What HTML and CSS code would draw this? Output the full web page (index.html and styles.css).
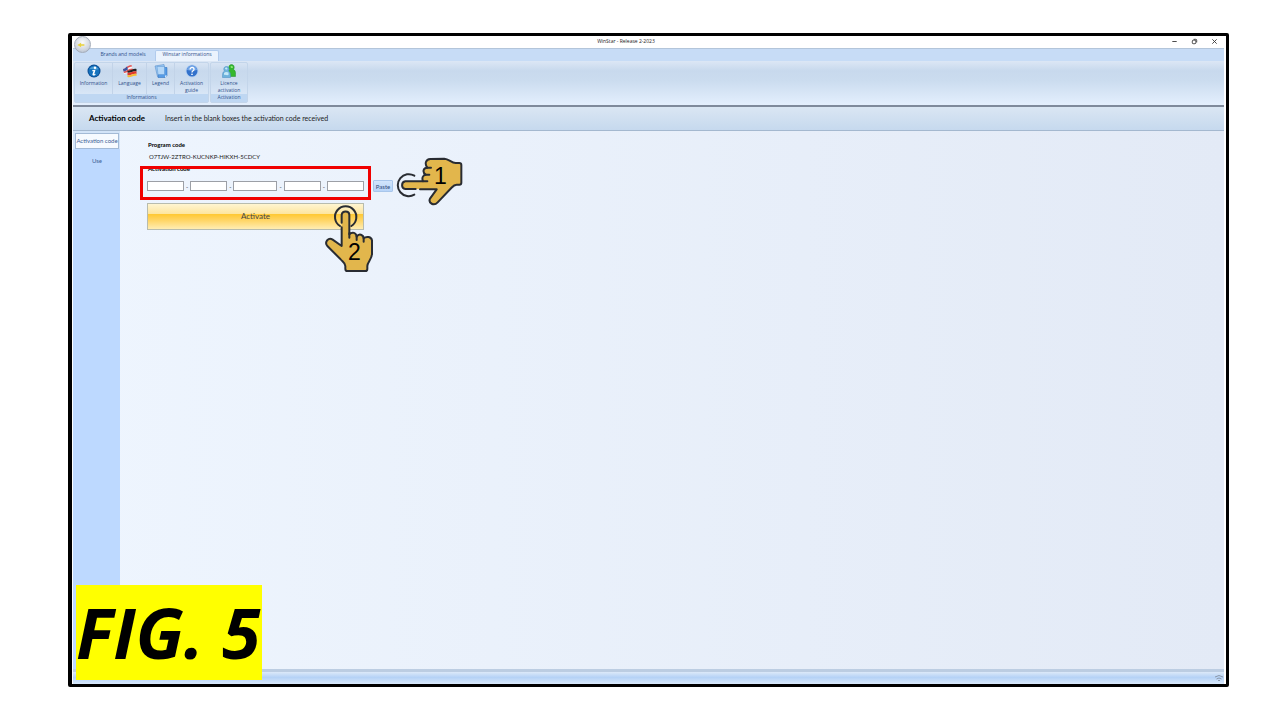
FILE: index.html
```html
<!DOCTYPE html>
<html lang="en">
<head>
  <meta charset="UTF-8">
  <meta name="viewport" content="width=device-width, initial-scale=1.0">
  <title>WinStar - Release 2-2023</title>
  <link rel="stylesheet" href="styles.css">
</head>
<body>
  <div class="window">
    <header class="titlebar">
      <button class="orb" aria-label="Menu">
        <svg viewBox="0 0 16 16"><path d="M2.500 8.500l4-2.500v1.700h3.500v1.600H6.500V11z" fill="#e9d23c"/></svg>
      </button>
      <h1>WinStar - Release 2-2023</h1>
      <div class="window-buttons">
        <button aria-label="Minimize"><svg viewBox="0 0 8 8"><path d="M1.500 4h5"/></svg></button>
        <button aria-label="Restore"><svg viewBox="0 0 8 8"><rect x="1.500" y="2.500" width="4" height="4" rx="1"/><path d="M3 1.500h2.500a1 1 0 0 1 1 1V5"/></svg></button>
        <button aria-label="Close"><svg viewBox="0 0 8 8"><path d="M1.500 1.500l5 5M6.500 1.500l-5 5"/></svg></button>
      </div>
    </header>

    <nav class="tabs">
      <a href="#brands" class="tab">Brands and models</a>
      <a href="#info" class="tab active">Winstar informations</a>
    </nav>

    <!-- Ribbon -->
    <div class="ribbon">
      <section class="group informations">
        <div class="tools">
          <button class="tool">
            <svg viewBox="0 0 28 28">
              <circle cx="14" cy="14" r="13" fill="#0b4d94"/>
              <circle cx="14" cy="14" r="11" fill="#1572bd"/>
              <path d="M5 10a10 9 0 0 1 18 0c-5 3-13-1-18 0z" fill="#4f9fd6"/>
              <circle cx="16" cy="7.500" r="2.500" fill="#fff"/>
              <path d="M10.500 12.500l6.500-1-2.500 9 3-1-1 2.500c-3 2-6.500 1-5.500-2l2-6-3 .500z" fill="#fff"/>
            </svg>
            Information
          </button>
          <button class="tool">
            <svg viewBox="0 0 28 28">
              <path d="M0 10c6 0 8-8 17-8l3 12c-8 0-11 6-18 6z" fill="#f7f2f2"/>
              <path d="M0 10c6 0 8-8 17-8l1 3C9 5 7 13 1 13zM1 15c6 0 9-6 18-6l1 3C12 12 9 18 2 18z" fill="#df5355"/>
              <path d="M0 10c4 0 5-3 8-5l2 6c-3 1-5 4-9 4z" fill="#3855a5"/>
              <path d="M9 13c6 2 11-5 18-3v5c-7-2-12 4-18 2z" fill="#222"/>
              <path d="M9 17c6 2 12-4 18-2v5c-6-2-12 4-18 2z" fill="#e2382a"/>
              <path d="M9 22c6 2 12-4 18-2v4c-6-2-12 4-18 2z" fill="#f5bc35"/>
            </svg>
            Language
          </button>
          <button class="tool">
            <svg viewBox="0 0 28 28">
              <path d="M2 4l18-3 4 21-17 3z" fill="#9ac8f4" stroke="#4a82c2"/>
              <path d="M10 7h16v16l-4 4H8z" fill="#559be6" stroke="#2968b5"/>
              <path d="M6 5h15v16H8z" fill="#b4d7f8" stroke="#5c94d0"/>
              <path d="M22 27v-4h4" fill="#e4f3ff"/>
            </svg>
            Legend
          </button>
          <button class="tool">
            <svg viewBox="0 0 28 28">
              <circle cx="14" cy="14" r="13" fill="#b8d2f2"/>
              <circle cx="14" cy="14" r="11" fill="#3271cb"/>
              <path d="M4 12a10 9 0 0 1 20 0c-6 2-13 2-20 0z" fill="#6fa3e6"/>
              <path d="M10 11c0-6 9-5 8 0-.5 3-4 2.500-4 6" fill="none" stroke="#fff" stroke-width="2.600"/>
              <circle cx="14" cy="20.500" r="1.700" fill="#fff"/>
            </svg>
            Activation<br>guide
          </button>
        </div>
        <h2>Informations</h2>
      </section>
      <section class="group activation">
        <div class="tools">
          <button class="tool">
            <svg viewBox="0 0 28 28">
              <path d="M15 11c-3-4-1-10 4-10s7 6 4 10c5 2 4 8 4 14H13c0-7-1-12 2-14z" fill="#34b82d" stroke="#23882a"/>
              <path d="M17 5c2-2 5-1 5 2-2 2-5 1-5-2z" fill="#90e779"/>
              <path d="M5 14c-3-4-1-9 4-9s6 5 4 9c4 2 4 6 4 13H1c0-7 0-11 4-13z" fill="#6fb3dc" stroke="#438ac0"/>
              <path d="M6 8c2-2 5-1 5 2-2 2-5 1-5-2zM4 18c3-3 6-2 9-1v5c-4 1-6-1-9 0z" fill="#c4e8f7"/>
            </svg>
            Licence<br>activation
          </button>
        </div>
        <h2>Activation</h2>
      </section>
    </div>

    <div class="heading">
      <h2>Activation code</h2>
      <p>Insert in the blank boxes the activation code received</p>
    </div>

    <main class="content">
      <nav class="sidebar">
        <a href="#code" class="active">Activation code</a>
        <a href="#use">Use</a>
      </nav>

      <form class="code-form">
        <h3>Program code</h3>
        <p class="program-code">O7TJW-2ZTRO-KUCNKP-HIKXH-5CDCY</p>
        <div class="code-area">
          <label for="code1">Activation code</label>
          <div class="code-row">
            <input type="text" id="code1"><span>-</span>
            <input type="text" aria-label="Second part"><span>-</span>
            <input type="text" class="wide" aria-label="Third part"><span>-</span>
            <input type="text" aria-label="Fourth part"><span>-</span>
            <input type="text" aria-label="Fifth part">
          </div>
          <div class="highlight"></div>
        </div>
        <div class="paste-area">
          <button type="button" class="paste">Paste</button>
          <!-- Step 1 pointer -->
          <div class="hand hand-one">
            <svg viewBox="261 36 201 147">
              <path class="ring" d="M316 92A33 33 0 1 0 316 149"/>
              <path class="skin" d="M320 132H289C276 130 276 111 289 109H342C338 99 341 91 350 89C339 81 343 68 355 68C346 56 350 43 364 42L406 41C420 42 427 54 440 54H451Q457 54 457 60V113Q457 119 451 119H443C434 119 430 126 424 132L386 172C375 184 357 175 363 161L383 133H333"/>
              <path class="crease" d="M342 109h13M350 89h11M355 68h11"/>
            </svg>
            <span>1</span>
          </div>
        </div>
        <div class="activate-area">
          <button type="button" class="activate">Activate</button>
          <!-- Step 2 pointer -->
          <div class="hand hand-two">
            <svg viewBox="42 180 150 204">
              <path class="ring" d="M90 243A32 32 0 1 1 124 243"/>
              <path class="skin" d="M95 233V209C97 196 117 196 118 209V268C127 259 139 263 140 275C147 264 160 269 161 280C170 272 184 276 186 286V326C186 343 172 351 172 363V371Q172 378 166 378H112Q106 378 106 371V363C106 354 97 350 91 342L52 303C42 290 56 276 68 284L95 303V247"/>
              <path class="crease" d="M118 265v13M140 273v12M161 280v10"/>
            </svg>
            <span>2</span>
          </div>
        </div>
      </form>
    </main>

    <footer class="statusbar">
      <svg viewBox="0 0 10 8"><path d="M1 3q4-3 8 0M2.500 5q2.500-2 5 0M4 6.500h2"/></svg>
    </footer>

    <div class="figure-label">FIG. 5</div>
  </div>
</body>
</html>
```

FILE: styles.css
```css
* {
  box-sizing: border-box;
}

body {
  margin: 0;
  padding: 33px 51px 33px 68px;
  min-height: 100vh;
  display: flex;
  background: #fff;
  color: #222;
  font-family: Lato, "Noto Sans", sans-serif;
  font-size: 6px;
  line-height: 7px;
}

h1, h2, h3, p {
  margin: 0;
  font-size: inherit;
  font-weight: normal;
}

button {
  padding: 0;
  border: 0;
  background: none;
  font: inherit;
  color: inherit;
}

a {
  color: inherit;
  text-decoration: none;
}

svg {
  display: block;
}

.window {
  position: relative;
  flex: 1;
  display: flex;
  flex-direction: column;
  border: 3px solid #000;
  border-left-width: 4px;
  border-radius: 2px;
  background: #fff;
}

.titlebar,
.tabs,
.ribbon {
  font-family: "Open Sans", sans-serif;
  font-size: 5px;
}

.titlebar {
  position: relative;
  height: 12px;
  display: flex;
  align-items: center;
  justify-content: center;
  padding-right: 46px;
}

.titlebar h1 {
  padding-bottom: 1px;
}

.orb {
  position: absolute;
  left: 2px;
  top: 0;
  z-index: 1;
  width: 17px;
  height: 17px;
  border: 1px solid #a3abb8;
  border-radius: 50%;
  background: radial-gradient(circle at 50% 35%, #fafbfb, #d2d7df 60%, #a9b6c9);
}

.window-buttons {
  position: absolute;
  right: 8px;
  top: 2px;
  display: flex;
  gap: 13px;
}

.window-buttons svg {
  width: 7px;
  height: 7px;
  fill: none;
  stroke: #333;
  stroke-width: 1;
}

/* Tabs and ribbon */
.tabs {
  height: 13px;
  display: flex;
  align-items: flex-end;
  margin: 0 2px 0 1px;
  padding-left: 20px;
  border-top: 1px solid #b3c5da;
  background: #c7dcf6;
  color: #2f508a;
}

.tab {
  width: 60px;
  height: 11px;
  padding: 1px 0;
  text-align: center;
  white-space: nowrap;
}

.tab.active {
  width: 64px;
  margin-left: 2px;
  border: 1px solid #b1cbed;
  border-bottom: 0;
  border-radius: 2px 2px 0 0;
  padding: 0;
  background: #ebf3fd;
}

.ribbon {
  height: 44px;
  display: flex;
  gap: 1px;
  margin: 0 2px 0 1px;
  padding: 1px;
  background: linear-gradient(#dce7f5, #c8d9ed 22%, #cbdcef 45%, #e4effd);
}

.group {
  height: 41px;
  display: flex;
  flex-direction: column;
  border: 1px solid #c3d5ea;
  border-radius: 2px;
  color: #2f508a;
}

.group h2 {
  height: 8px;
  text-align: center;
  background: #bfd7f2;
}

.tools {
  flex: 1;
  display: flex;
}

.informations {
  width: 135px;
}

.activation {
  width: 38px;
}

.tool {
  flex: 1;
  display: flex;
  flex-direction: column;
  align-items: center;
  justify-content: flex-start;
  padding-top: 1px;
}

.informations .tool {
  border-right: 1px solid #c2d3e8;
}

.informations .tool:nth-child(1) {
  flex: 0 0 38px;
}

.informations .tool:nth-child(3) {
  flex: 0 0 28px;
}

.informations .tool:last-child {
  border-right: 0;
}

.tool svg {
  width: 14px;
  height: 14px;
  margin-bottom: 2px;
}

.heading {
  height: 26px;
  display: flex;
  align-items: center;
  margin: 0 2px 0 1px;
  padding-left: 16px;
  border-top: 2px solid #7f8a9b;
  border-bottom: 1px solid #a4b8cf;
  background: linear-gradient(#dae6f3, #c6d9ee);
  font-size: 7px;
}

.heading h2 {
  width: 76px;
  font-size: 8px;
  font-weight: bold;
  color: #000;
}

/* Content */
.content {
  flex: 1;
  display: flex;
  margin: 0 2px 0 1px;
  background: linear-gradient(90deg, #eef5fe, #e3eaf6);
}

.sidebar {
  width: 47px;
  padding: 2px 1px 0 2px;
  background: linear-gradient(#d3e4f8 18px, #bdd9ff 18px);
  color: #3e5f96;
  text-align: center;
}

.sidebar a {
  display: block;
  height: 16px;
  margin-bottom: 4px;
  padding: 4px 0;
  white-space: nowrap;
}

.sidebar .active {
  border: 1px solid #a3bad6;
  padding: 3px 0;
  background: #f6faff;
}

.code-form {
  display: grid;
  grid-template-columns: 217px 20px;
  column-gap: 9px;
  align-content: start;
  padding: 10px 0 0 27px;
}

.code-form h3,
.code-form label {
  grid-column: 1 / -1;
  font-weight: bold;
  color: #000;
}

.code-form h3 {
  padding-left: 1px;
}

.program-code {
  grid-column: 1 / -1;
  margin: 5px 0;
  padding-left: 2px;
}

.code-area {
  position: relative;
}

.code-area label {
  display: block;
  padding-left: 1px;
}

.code-row {
  display: flex;
  align-items: center;
  justify-content: space-between;
  margin-top: 9px;
}

.code-row input {
  width: 37px;
  height: 10px;
  padding: 0 1px;
  border: 1px solid #9c9fa6;
  background: #fff;
  font: inherit;
}

.code-row .wide {
  width: 44px;
}

.highlight {
  position: absolute;
  inset: 1px -7px -8px;
  border: 3px solid #f00000;
  pointer-events: none;
}

.paste-area,
.activate-area {
  position: relative;
}

.paste {
  display: block;
  width: 20px;
  height: 12px;
  margin-top: 15px;
  border: 1px solid #a8c6eb;
  border-radius: 1px;
  background: linear-gradient(#d2e5fc, #b7d4f8);
  color: #2f4a78;
}

.activate {
  display: block;
  width: 100%;
  height: 27px;
  margin-top: 11px;
  border: 1px solid #b8bcae;
  background: linear-gradient(#fff5d2, #fde6a0 38%, #ffc935 42%, #ffd565 65%, #ffedb3);
  color: #444;
  font-size: 8px;
}

.hand {
  position: absolute;
  color: #000;
  font-family: "Liberation Sans", sans-serif;
  font-size: 23px;
  line-height: 24px;
}

.hand svg {
  width: 100%;
  height: 100%;
}

.hand span {
  position: absolute;
}

.hand-one {
  left: 23px;
  top: -8px;
  width: 67px;
  height: 49px;
}

.hand-one span {
  left: 38px;
  top: 7px;
}

.hand-two {
  right: -10px;
  top: 13px;
  width: 50px;
  height: 68px;
}

.hand-two span {
  left: 24px;
  top: 35px;
}

.ring,
.skin,
.crease {
  fill: none;
  stroke: #292c32;
  stroke-width: 6;
  stroke-linecap: round;
  stroke-linejoin: round;
}

.skin {
  fill: #e2b64c;
}

.statusbar {
  height: 15px;
  display: flex;
  align-items: center;
  justify-content: flex-end;
  margin: 0 2px 0 1px;
  border-top: 3px solid #bccde2;
  background: linear-gradient(#dce9f9, #b5d2f6 45%, #d9e9fb);
}

.statusbar svg {
  width: 10px;
  height: 8px;
  fill: none;
  stroke: #8b98aa;
}

.figure-label {
  position: absolute;
  left: 4px;
  bottom: 4px;
  width: 186px;
  height: 95px;
  background: #ff0;
  color: #000;
  font-family: "Open Sans", sans-serif;
  font-size: 70px;
  font-style: italic;
  font-weight: bold;
  line-height: 94px;
  white-space: nowrap;
}
```
